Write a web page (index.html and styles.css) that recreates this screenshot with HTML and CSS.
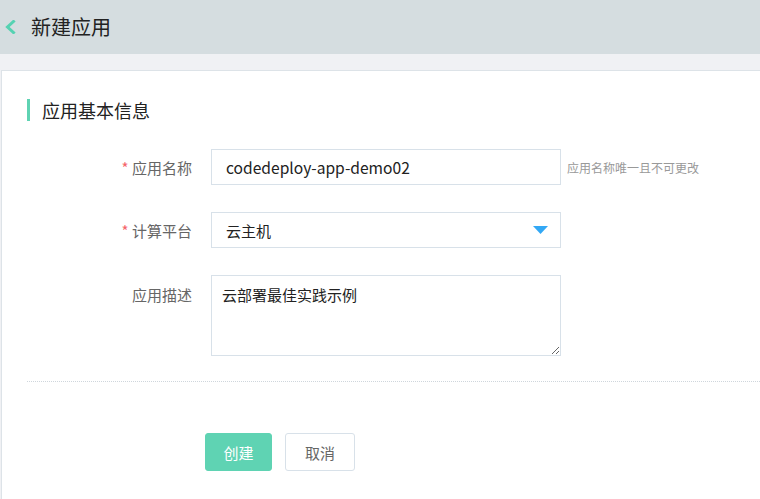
FILE: index.html
```html
<!DOCTYPE html>
<html lang="zh-CN">
<head>
<meta charset="utf-8">
<title>新建应用</title>
<link rel="stylesheet" href="styles.css">
</head>
<body>
<header class="topbar">
  <a class="back" href="#" aria-label="返回">
    <svg width="12" height="14" viewBox="0 0 12 14"><path d="M9.5 1.5 L3.5 7 L9.5 12.5" stroke="#55d2b2" stroke-width="3" fill="none" stroke-linecap="square"/></svg>
  </a>
  <h1 class="title">新建应用</h1>
</header>
<main class="page">
  <section class="card">
    <h2 class="section-title">应用基本信息</h2>
    <div class="form">
      <div class="row">
        <label class="label"><span class="req">*</span> 应用名称</label>
        <input class="input" type="text" value="codedeploy-app-demo02">
        <span class="hint">应用名称唯一且不可更改</span>
      </div>
      <div class="row">
        <label class="label"><span class="req">*</span> 计算平台</label>
        <div class="select">
          <span>云主机</span>
          <svg class="caret" width="15" height="8" viewBox="0 0 15 8"><path d="M0 0 H15 L7.5 8 Z" fill="#33a8f5"/></svg>
        </div>
      </div>
      <div class="row row-top">
        <label class="label label-top">应用描述</label>
        <textarea class="textarea">云部署最佳实践示例</textarea>
      </div>
    </div>
    <div class="divider"></div>
    <div class="actions">
      <button class="btn btn-primary" type="button">创建</button>
      <button class="btn btn-default" type="button">取消</button>
    </div>
  </section>
</main>
</body>
</html>
```

FILE: styles.css
```css
html, body {
  margin: 0;
  padding: 0;
  height: 100%;
  overflow: hidden;
}
body {
  background: #f0f1f4;
  font-family: "Noto Sans CJK SC", "Noto Sans", sans-serif;
  color: #333;
}
.topbar {
  height: 54px;
  background: #d5dde0;
  display: flex;
  align-items: center;
}
.back {
  display: flex;
  margin-left: 4px;
  width: 12px;
  height: 14px;
}
.title {
  margin: 0 0 0 15px;
  font-size: 20px;
  font-weight: normal;
  color: #222;
  line-height: 26px;
}
.page {
  padding: 16px 0 0 1px;
}
.card {
  background: #fff;
  border: 1px solid #dde3e8;
  border-right: none;
  border-bottom: none;
  height: calc(100vh - 70px);
  box-sizing: border-box;
  padding: 28px 0 0 25px;
}
.section-title {
  margin: 0;
  font-size: 18px;
  font-weight: normal;
  color: #222;
  line-height: 22px;
  border-left: 3px solid #5fd3b3;
  padding-left: 12px;
}
.form {
  margin-top: 28px;
}
.row {
  display: flex;
  align-items: center;
  margin-bottom: 27px;
}
.row-top {
  align-items: flex-start;
  margin-bottom: 0;
}
.label {
  width: 165px;
  margin-right: 19px;
  text-align: right;
  font-size: 15px;
  color: #666;
}
.label-top {
  padding-top: 10px;
  line-height: 20px;
}
.req {
  color: #f5646a;
}
.input, .select, .textarea {
  width: 350px;
  box-sizing: border-box;
  border: 1px solid #d8e1e9;
  background: #fff;
  font-family: inherit;
  color: #222;
  outline: none;
  margin: 0;
}
.input {
  height: 36px;
  padding: 0 14px;
  font-size: 15.6px;
}
.select {
  height: 36px;
  padding: 0 12px 0 14px;
  font-size: 15px;
  display: flex;
  align-items: center;
  justify-content: space-between;
}
.textarea {
  height: 81px;
  padding: 9px 10px;
  font-size: 15px;
  line-height: 20px;
  resize: vertical;
  display: block;
}
.hint {
  margin-left: 6px;
  font-size: 12px;
  color: #999;
}
.divider {
  margin-top: 25px;
  border-top: 1px dotted #cfd6dc;
}
.actions {
  margin: 51px 0 0 178px;
  display: flex;
  gap: 13px;
}
.btn {
  height: 38px;
  border-radius: 3px;
  font-family: inherit;
  font-size: 15px;
  padding: 0;
  cursor: pointer;
}
.btn-primary {
  width: 67px;
  background: #5fd3b3;
  border: 1px solid #5fd3b3;
  color: #fff;
}
.btn-default {
  width: 70px;
  background: #fff;
  border: 1px solid #d8e1e9;
  color: #666;
}
```
